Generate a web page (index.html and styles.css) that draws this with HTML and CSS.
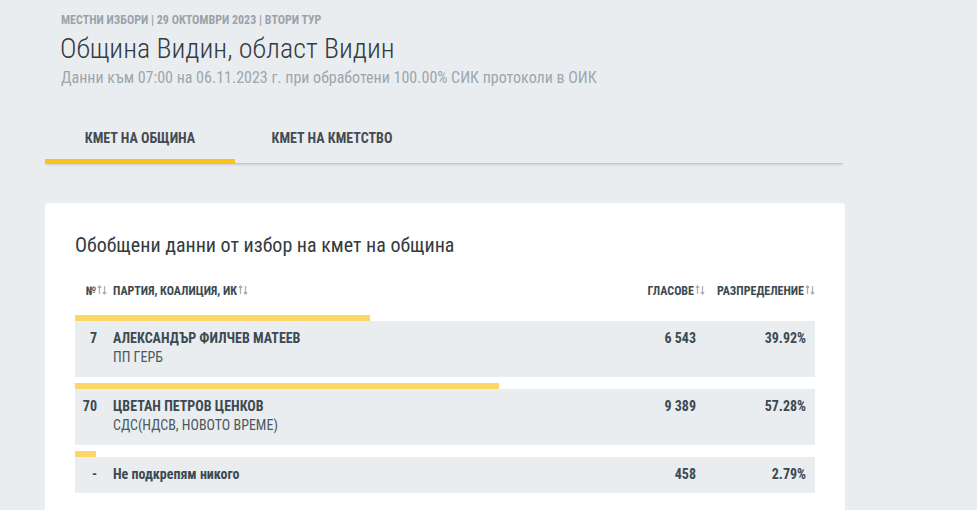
FILE: index.html
```html
<!DOCTYPE html>
<html lang="bg">
<head>
<meta charset="utf-8">
<title>Община Видин</title>
<link rel="stylesheet" href="styles.css">
</head>
<body>
<div class="page">
  <header class="head">
    <div class="crumbs">МЕСТНИ ИЗБОРИ | 29 ОКТОМВРИ 2023 | ВТОРИ ТУР</div>
    <h1 class="title">Община Видин, област Видин</h1>
    <div class="subtitle">Данни към 07:00 на 06.11.2023 г. при обработени 100.00% СИК протоколи в ОИК</div>
  </header>

  <nav class="tabs">
    <div class="tab active">КМЕТ НА ОБЩИНА</div>
    <div class="tab">КМЕТ НА КМЕТСТВО</div>
  </nav>

  <section class="card">
    <h2 class="card-title">Обобщени данни от избор на кмет на община</h2>

    <div class="thead">
      <div class="th num">№<svg class="sort" viewBox="0 0 10 10"><path d="M2.5 1v8M0.8 2.8L2.5 1l1.7 1.8M7.5 9V1M5.8 7.2L7.5 9l1.7-1.8"/></svg></div>
      <div class="th party">ПАРТИЯ, КОАЛИЦИЯ, ИК<svg class="sort" viewBox="0 0 10 10"><path d="M2.5 1v8M0.8 2.8L2.5 1l1.7 1.8M7.5 9V1M5.8 7.2L7.5 9l1.7-1.8"/></svg></div>
      <div class="th votes">ГЛАСОВЕ<svg class="sort" viewBox="0 0 10 10"><path d="M2.5 1v8M0.8 2.8L2.5 1l1.7 1.8M7.5 9V1M5.8 7.2L7.5 9l1.7-1.8"/></svg></div>
      <div class="th share">РАЗПРЕДЕЛЕНИЕ<svg class="sort" viewBox="0 0 10 10"><path d="M2.5 1v8M0.8 2.8L2.5 1l1.7 1.8M7.5 9V1M5.8 7.2L7.5 9l1.7-1.8"/></svg></div>
    </div>

    <div class="entry">
      <div class="bar" style="width:39.92%"></div>
      <div class="row">
        <div class="td num">7</div>
        <div class="td party"><div class="name">АЛЕКСАНДЪР ФИЛЧЕВ МАТЕЕВ</div><div class="org">ПП ГЕРБ</div></div>
        <div class="td votes">6 543</div>
        <div class="td share">39.92%</div>
      </div>
    </div>

    <div class="entry">
      <div class="bar" style="width:57.28%"></div>
      <div class="row">
        <div class="td num">70</div>
        <div class="td party"><div class="name">ЦВЕТАН ПЕТРОВ ЦЕНКОВ</div><div class="org">СДС(НДСВ, НОВОТО ВРЕМЕ)</div></div>
        <div class="td votes">9 389</div>
        <div class="td share">57.28%</div>
      </div>
    </div>

    <div class="entry">
      <div class="bar" style="width:2.79%"></div>
      <div class="row">
        <div class="td num">-</div>
        <div class="td party"><div class="name">Не подкрепям никого</div></div>
        <div class="td votes">458</div>
        <div class="td share">2.79%</div>
      </div>
    </div>
  </section>
</div>
</body>
</html>
```

FILE: styles.css
```css
html, body {
  margin: 0;
  padding: 0;
  background: #eaedf0;
}

body {
  font-family: "Roboto Condensed", "Liberation Sans Narrow", Roboto, sans-serif;
  color: #3c4a52;
}

.page {
  width: 800px;
  margin-left: 45px;
}

.head {
  padding: 13px 0 0 16px;
}

.crumbs {
  font-size: 12px;
  line-height: 14px;
  font-weight: 700;
  color: #9aa3aa;
}

.title {
  margin: 5px 0 0 -1px;
  font-size: 28px;
  line-height: 34px;
  font-weight: 300;
  color: #333b40;
}

.subtitle {
  margin-top: 2px;
  font-size: 16px;
  line-height: 20px;
  color: #9ea6ac;
}

.tabs {
  display: flex;
  width: 798px;
  margin-top: 27px;
  border-bottom: 1px solid #c4c8cb;
  box-shadow: 0 2px 2px -1px rgba(0, 0, 0, 0.12);
}

.tab {
  width: 190px;
  text-align: center;
  font-size: 14px;
  font-weight: 700;
  line-height: 18px;
  padding: 14px 0 12px;
  color: #444c52;
  border-bottom: 5px solid transparent;
  margin-bottom: -1px;
}

.tab + .tab {
  padding-left: 2px;
}

.tab.active {
  border-bottom-color: #fcc21b;
}

.card {
  margin-top: 39px;
  background: #ffffff;
  border-radius: 4px;
  padding: 30px 30px 30px;
  min-height: 300px;
}

.card-title {
  margin: 0;
  font-size: 20px;
  line-height: 24px;
  font-weight: 400;
  color: #333b40;
}

.thead,
.row {
  display: grid;
  grid-template-columns: 32px 1fr 120px 110px;
}

.thead {
  margin-top: 24px;
  margin-bottom: 14px;
  font-size: 12px;
  line-height: 20px;
  font-weight: 700;
  color: #3c4a52;
}

.th {
  display: flex;
  align-items: center;
  white-space: nowrap;
}

.th.num,
.th.votes,
.th.share {
  justify-content: flex-end;
}

.th.party {
  padding-left: 6px;
}

.sort {
  width: 10px;
  height: 10px;
  margin-left: 1px;
  margin-top: -3px;
  fill: none;
  stroke: #a9b1b7;
  stroke-width: 1.3;
}

.entry {
  margin-bottom: 6px;
}

.bar {
  height: 6px;
  background: #fcd766;
}

.row {
  background: #eaedf0;
  padding: 8px 0 10px;
  font-size: 14px;
  font-weight: 700;
  line-height: 18px;
  color: #3c4a52;
}

.td.num,
.td.votes,
.td.share {
  text-align: right;
  padding-right: 9px;
}

.td.num {
  padding-right: 10px;
}

.td.party {
  padding-left: 6px;
}

.org {
  font-weight: 400;
  line-height: 20px;
  color: #4a5860;
}
```
